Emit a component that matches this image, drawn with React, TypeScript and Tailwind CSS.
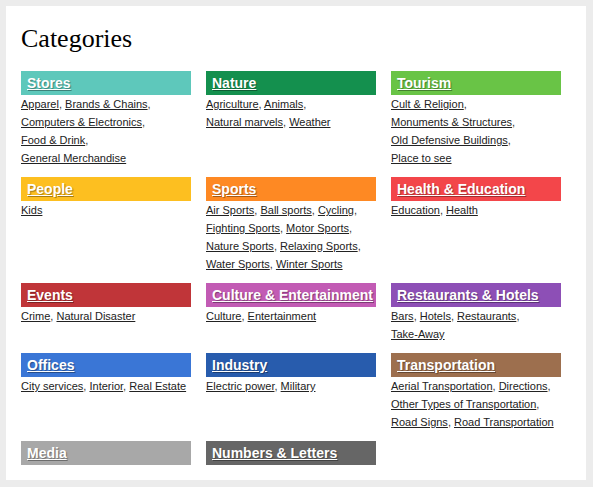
const categories: { title: string; color: string; links: string[] }[] = [
  {
    title: "Stores",
    color: "bg-[#5ec8bb]",
    links: ["Apparel", "Brands & Chains", "Computers & Electronics", "Food & Drink", "General Merchandise"],
  },
  {
    title: "Nature",
    color: "bg-[#14904e]",
    links: ["Agriculture", "Animals", "Natural marvels", "Weather"],
  },
  {
    title: "Tourism",
    color: "bg-[#69c446]",
    links: ["Cult & Religion", "Monuments & Structures", "Old Defensive Buildings", "Place to see"],
  },
  { title: "People", color: "bg-[#fdbf20]", links: ["Kids"] },
  {
    title: "Sports",
    color: "bg-[#fe8923]",
    links: [
      "Air Sports",
      "Ball sports",
      "Cycling",
      "Fighting Sports",
      "Motor Sports",
      "Nature Sports",
      "Relaxing Sports",
      "Water Sports",
      "Winter Sports",
    ],
  },
  { title: "Health & Education", color: "bg-[#f3464a]", links: ["Education", "Health"] },
  { title: "Events", color: "bg-[#c03539]", links: ["Crime", "Natural Disaster"] },
  { title: "Culture & Entertainment", color: "bg-[#c25bb4]", links: ["Culture", "Entertainment"] },
  {
    title: "Restaurants & Hotels",
    color: "bg-[#8d4fb6]",
    links: ["Bars", "Hotels", "Restaurants", "Take-Away"],
  },
  { title: "Offices", color: "bg-[#3a76d6]", links: ["City services", "Interior", "Real Estate"] },
  { title: "Industry", color: "bg-[#285cad]", links: ["Electric power", "Military"] },
  {
    title: "Transportation",
    color: "bg-[#9d6f4e]",
    links: [
      "Aerial Transportation",
      "Directions",
      "Other Types of Transportation",
      "Road Signs",
      "Road Transportation",
    ],
  },
  { title: "Media", color: "bg-[#a8a8a8]", links: [] },
  { title: "Numbers & Letters", color: "bg-[#666666]", links: [] },
];

export default function App() {
  return (
    <div className="w-[593px] h-[487px] bg-[#ececec] p-[6px] pr-[7px] pb-[7px]">
      <div className="bg-white w-full h-full px-[15px] pt-[15px]">
        <h1 className="font-['Liberation_Serif',serif] text-[26px] leading-[32px] mt-[2px] mb-[16px] text-black">
          Categories
        </h1>
        <div className="grid grid-cols-[170px_170px_170px] gap-x-[15px] gap-y-[10px]">
          {categories.map((cat) => (
            <div key={cat.title}>
              <div
                className={`${cat.color} h-[24px] pl-[6px] font-['Liberation_Sans',Arial,sans-serif] font-bold text-[14px] leading-[24px] text-white whitespace-nowrap`}
              >
                <a href="#" className="underline [text-shadow:1px_1px_1px_rgba(0,0,0,0.35)]">
                  {cat.title}
                </a>
              </div>
              {cat.links.length > 0 && (
                <div className="font-['Liberation_Sans',Arial,sans-serif] text-[11px] leading-[18px] text-[#333]">
                  {cat.links.map((link, i) => (
                    <span key={link}>
                      <span className="whitespace-nowrap">
                        <a href="#" className="underline text-[#222]">
                          {link}
                        </a>
                        {i < cat.links.length - 1 ? "," : ""}
                      </span>{" "}
                    </span>
                  ))}
                </div>
              )}
            </div>
          ))}
        </div>
      </div>
    </div>
  );
}
